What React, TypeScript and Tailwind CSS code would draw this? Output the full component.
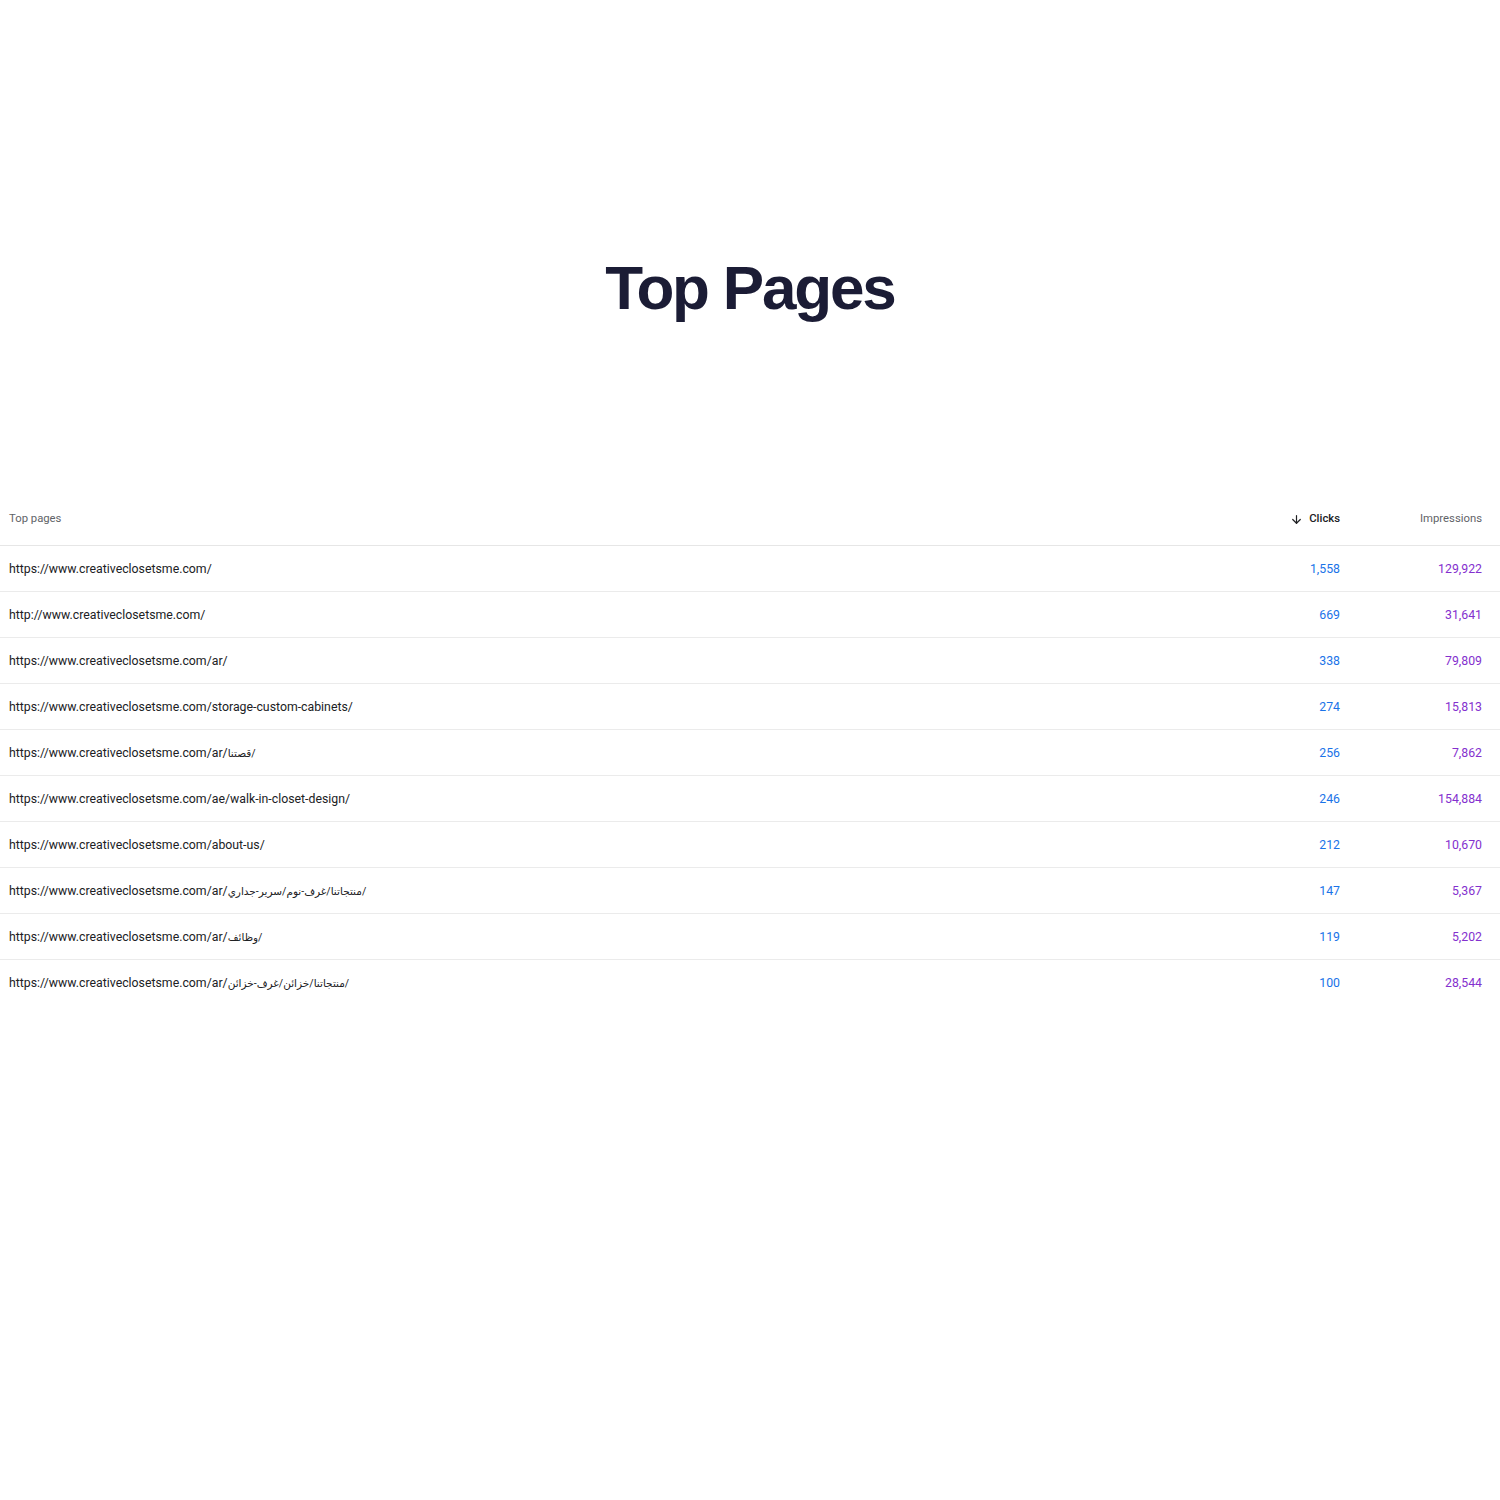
import { ArrowDown } from "lucide-react";

interface PageRow {
  url: string;
  arabic?: string;
  clicks: string;
  impressions: string;
}

const base = "https://www.creativeclosetsme.com/";

const rows: PageRow[] = [
  { url: base, clicks: "1,558", impressions: "129,922" },
  { url: "http://www.creativeclosetsme.com/", clicks: "669", impressions: "31,641" },
  { url: base + "ar/", clicks: "338", impressions: "79,809" },
  { url: base + "storage-custom-cabinets/", clicks: "274", impressions: "15,813" },
  { url: base + "ar/", arabic: "قصتنا/", clicks: "256", impressions: "7,862" },
  { url: base + "ae/walk-in-closet-design/", clicks: "246", impressions: "154,884" },
  { url: base + "about-us/", clicks: "212", impressions: "10,670" },
  { url: base + "ar/", arabic: "منتجاتنا/غرف-نوم/سرير-جداري/", clicks: "147", impressions: "5,367" },
  { url: base + "ar/", arabic: "وظائف/", clicks: "119", impressions: "5,202" },
  { url: base + "ar/", arabic: "منتجاتنا/خزائن/غرف-خزائن/", clicks: "100", impressions: "28,544" },
];

export default function App() {
  return (
    <div className="min-h-[1500px] w-[1500px] bg-white">
      <h1 className="pt-[257px] text-center text-[62px] font-bold leading-none tracking-[-0.035em] text-[#1b1c35] [font-family:'Liberation_Sans',Arial,sans-serif]">
        Top Pages
      </h1>

      <div className="mt-[173px] [font-family:Roboto,'DejaVu_Sans',sans-serif]">
        {/* Header */}
        <div className="grid h-[54px] grid-cols-[1fr_142px_142px] items-center border-b border-[#e6e6e6] pr-[18px] pt-[2px] text-[11.3px]">
          <div className="pl-[9px] text-[#5f6368]">Top pages</div>
          <div className="flex items-center justify-end gap-[6px] font-medium text-[#202124]">
            <ArrowDown className="h-[13px] w-[13px]" strokeWidth={2.2} />
            Clicks
          </div>
          <div className="text-right text-[#5f6368]">Impressions</div>
        </div>

        {/* Rows */}
        {rows.map((row, i) => (
          <div
            key={row.url + (row.arabic ?? "")}
            className={`grid grid-cols-[1fr_142px_142px] items-center pr-[18px] pt-[2px] text-[12.3px] ${
              i < rows.length - 1 ? "h-[46px] border-b border-[#ebebeb]" : "h-[45px]"
            }`}
          >
            <div className="pl-[9px] text-[#202124]">
              {row.url}
              {row.arabic && <span className="text-[10.5px]">{row.arabic}</span>}
            </div>
            <div className="text-right text-[#1a73e8]">{row.clicks}</div>
            <div className="text-right text-[#8430ce]">{row.impressions}</div>
          </div>
        ))}
      </div>
    </div>
  );
}
